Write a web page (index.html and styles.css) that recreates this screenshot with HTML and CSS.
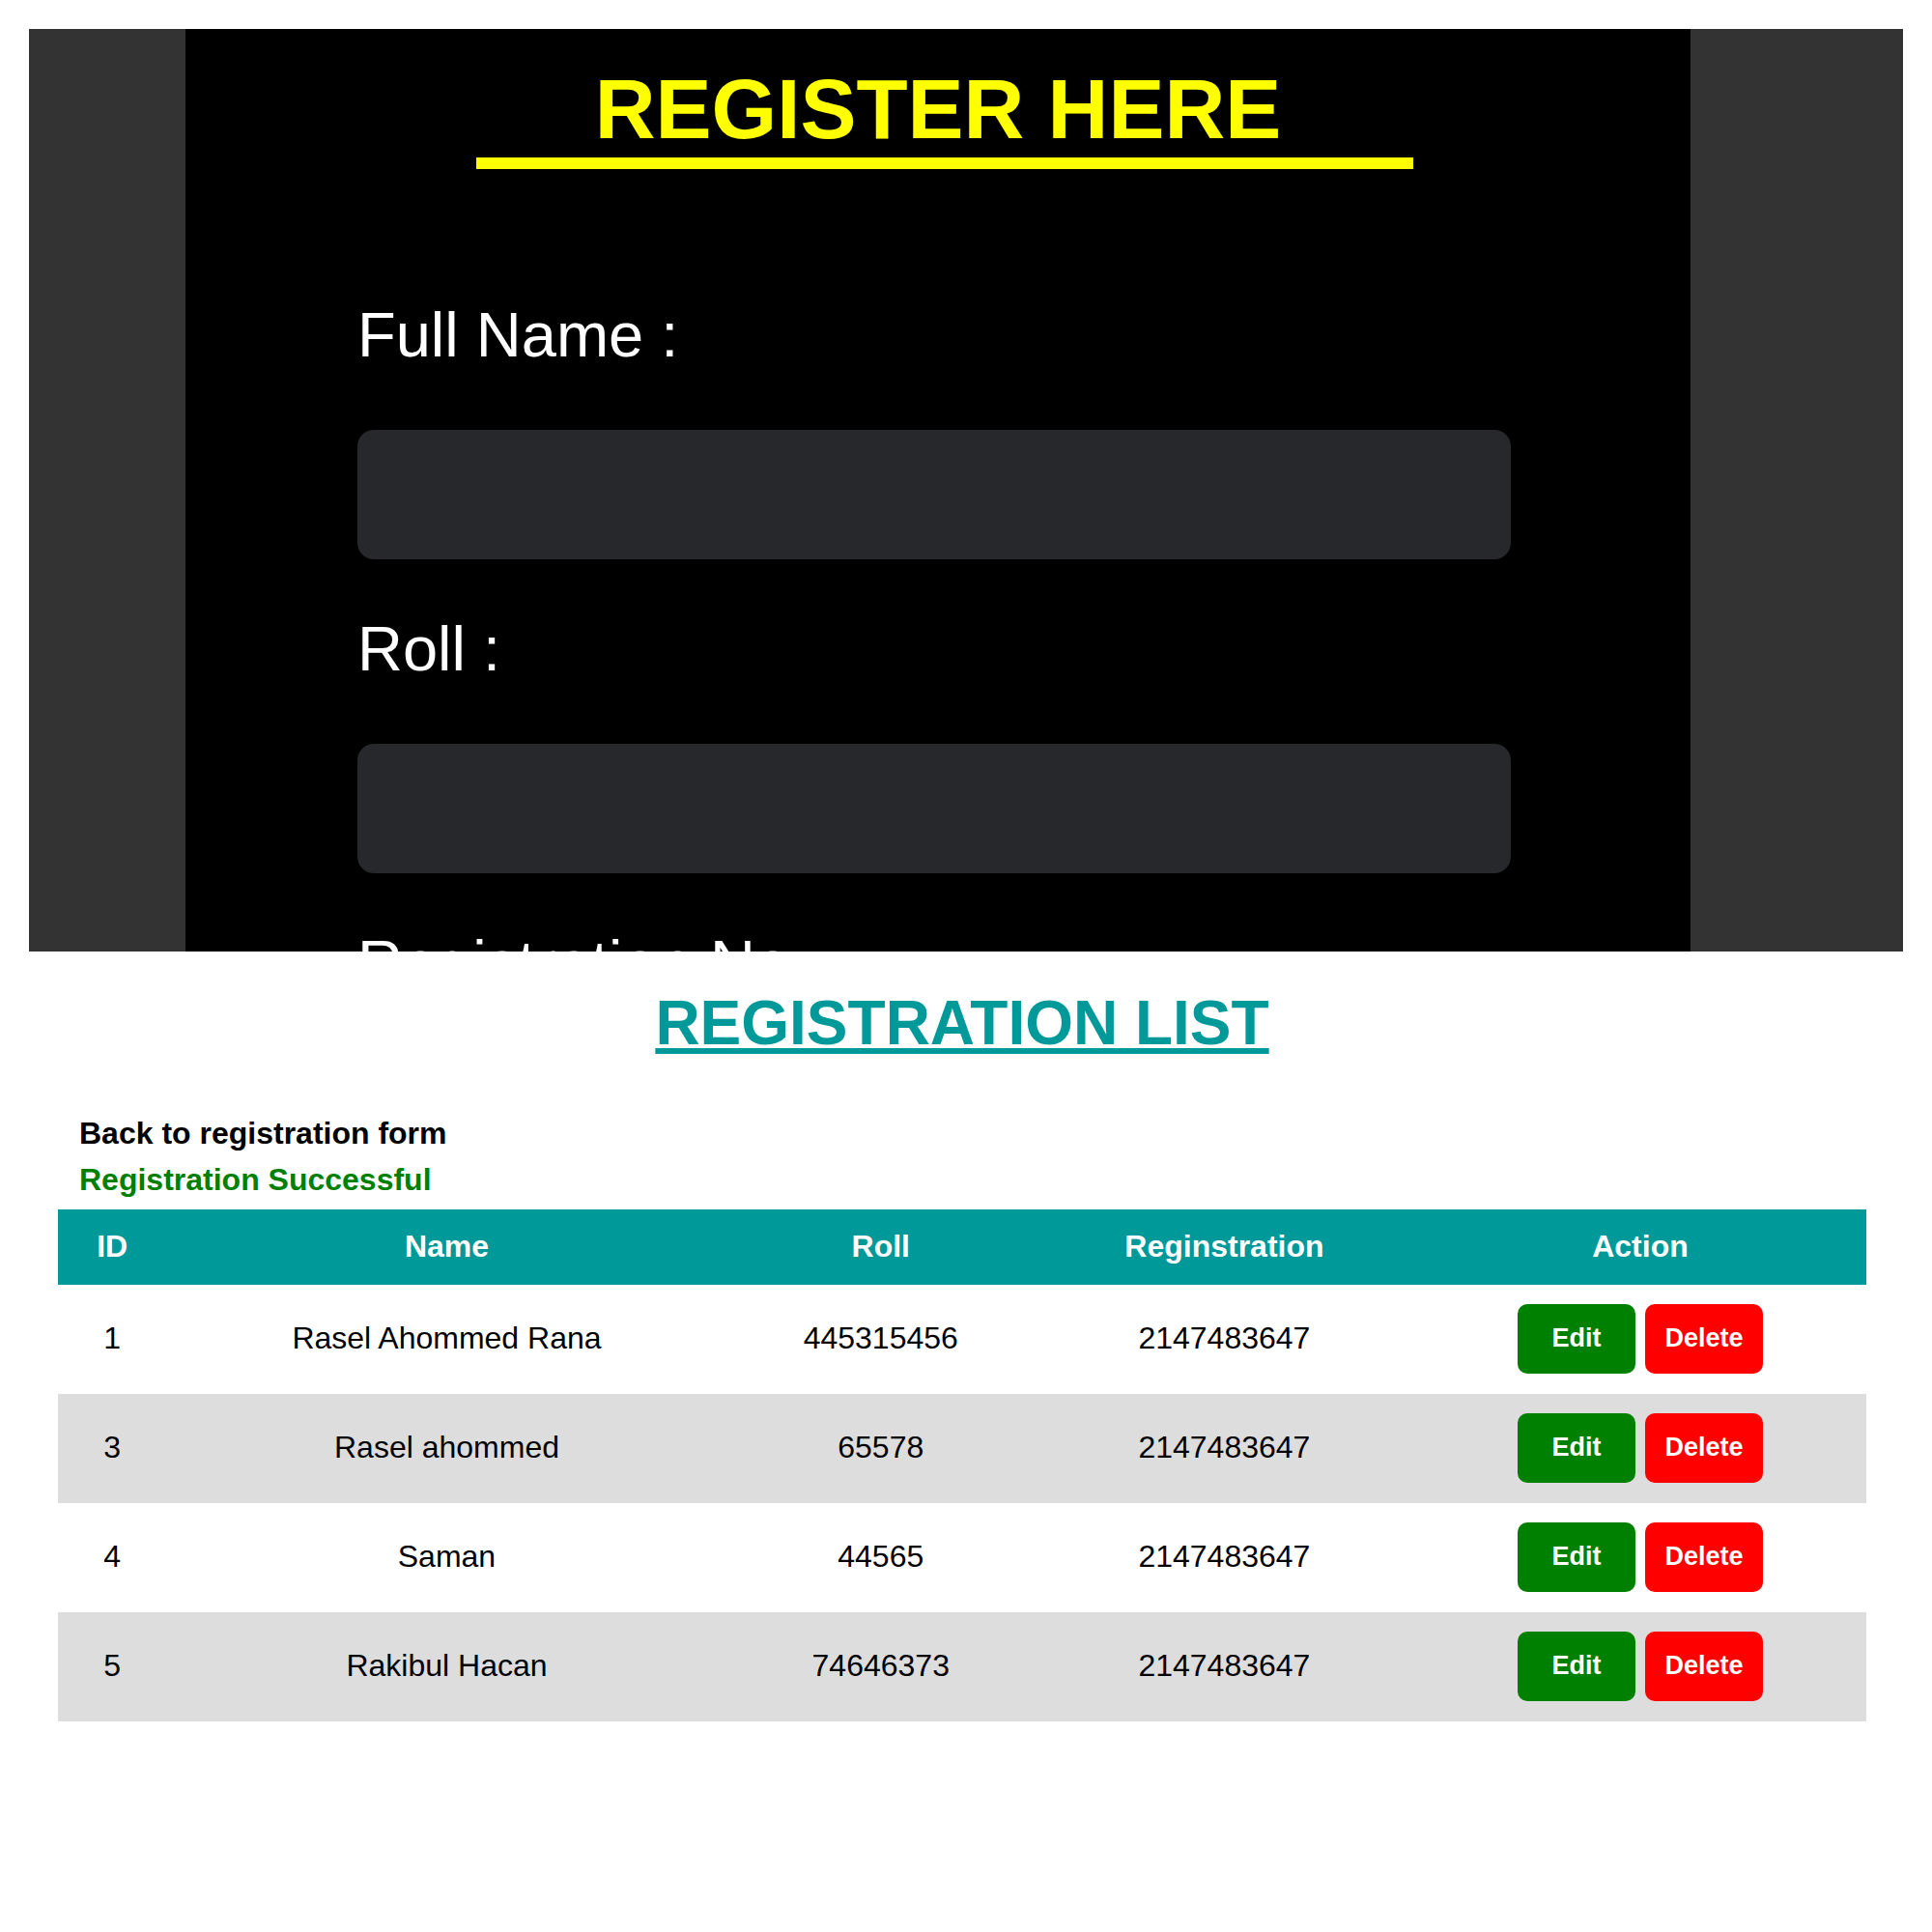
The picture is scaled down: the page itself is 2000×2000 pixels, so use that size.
FILE: index.html
```html
<!DOCTYPE html>
<html lang="en">
<head>
  <meta charset="utf-8">
  <title>Registration</title>
  <link rel="stylesheet" href="styles.css">
</head>
<body>
  <section class="register">
    <form class="register-form">
      <h1 class="register-title">REGISTER HERE</h1>
      <div class="register-rule"></div>
      <div class="fields">
        <div class="field">
          <label class="field-label" for="full-name">Full Name :</label>
          <input class="field-input" id="full-name" type="text">
        </div>
        <div class="field">
          <label class="field-label" for="roll">Roll :</label>
          <input class="field-input" id="roll" type="text">
        </div>
        <div class="field">
          <label class="field-label" for="registration-no">Registration No :</label>
          <input class="field-input" id="registration-no" type="text">
        </div>
      </div>
    </form>
  </section>

  <main class="list">
    <h2 class="list-title">REGISTRATION LIST</h2>
    <div class="list-notes">
      <a class="back-link" href="#">Back to registration form</a>
      <p class="success">Registration Successful</p>
    </div>
    <table class="records">
      <colgroup>
        <col class="col-id">
        <col class="col-name">
        <col class="col-roll">
        <col class="col-registration">
        <col class="col-action">
      </colgroup>
      <thead>
        <tr><th>ID</th><th>Name</th><th>Roll</th><th>Reginstration</th><th>Action</th></tr>
      </thead>
      <tbody>
        <tr>
          <td>1</td><td>Rasel Ahommed Rana</td><td>445315456</td><td>2147483647</td>
          <td><div class="actions"><button class="btn btn-edit" type="button">Edit</button><button class="btn btn-delete" type="button">Delete</button></div></td>
        </tr>
        <tr>
          <td>3</td><td>Rasel ahommed</td><td>65578</td><td>2147483647</td>
          <td><div class="actions"><button class="btn btn-edit" type="button">Edit</button><button class="btn btn-delete" type="button">Delete</button></div></td>
        </tr>
        <tr>
          <td>4</td><td>Saman</td><td>44565</td><td>2147483647</td>
          <td><div class="actions"><button class="btn btn-edit" type="button">Edit</button><button class="btn btn-delete" type="button">Delete</button></div></td>
        </tr>
        <tr>
          <td>5</td><td>Rakibul Hacan</td><td>74646373</td><td>2147483647</td>
          <td><div class="actions"><button class="btn btn-edit" type="button">Edit</button><button class="btn btn-delete" type="button">Delete</button></div></td>
        </tr>
      </tbody>
    </table>
  </main>
</body>
</html>
```
FILE: styles.css
```css
* {
  box-sizing: border-box;
}

body {
  margin: 0;
  padding: 30px;
  background: #fff;
  color: #000;
  font-family: Arial, "Liberation Sans", sans-serif;
  font-size: 32px;
}

/* Form panel: the part below the fold is clipped */
.register {
  aspect-ratio: 388 / 191;
  min-height: 0;
  overflow: hidden;
  padding: 0 220px 0 162px;
  background: #333;
}

.register-form {
  padding-top: 33px;
  background: #000;
}

.register-title {
  margin: 0;
  color: #ff0;
  font-size: 87px;
  line-height: 100px;
  text-align: center;
}

.register-rule {
  height: 12px;
  margin: 0 287px 132px 301px;
  background: #ff0;
}

.fields {
  display: flex;
  flex-direction: column;
  gap: 53px;
  padding: 0 186px 0 178px;
}

.field {
  display: flex;
  flex-direction: column;
  gap: 58px;
}

.field-label {
  color: #fff;
  font-size: 65px;
  line-height: 80px;
}

.field-input {
  width: 100%;
  height: 134px;
  padding: 0 32px;
  border: 0;
  border-radius: 17px;
  background: #27282c;
  color: #fff;
  font: inherit;
}

.list {
  padding: 34px 38px 0 30px;
}

.list-title {
  margin: 0 0 50px;
  color: #099;
  font-size: 64px;
  line-height: 80px;
  text-align: center;
  text-decoration: underline;
  text-decoration-thickness: 6px;
  text-underline-offset: 4px;
  text-decoration-skip-ink: none;
}

.list-notes {
  display: flex;
  flex-direction: column;
  align-items: flex-start;
  margin-bottom: 7px;
  padding-left: 22px;
  font-weight: bold;
  line-height: 48px;
}

.back-link {
  color: #000;
  text-decoration: none;
}

.success {
  margin: 0;
  color: green;
}

.records {
  width: 100%;
  table-layout: fixed;
  border-collapse: collapse;
  text-align: center;
}

.col-id { width: 6%; }
.col-name { width: 31%; }
.col-roll { width: 17%; }
.col-registration { width: 21%; }
.col-action { width: 25%; }

.records th {
  height: 78px;
  padding: 0 0 2px;
  background: #099;
  color: #fff;
}

.records td {
  height: 113px;
  padding: 0 0 2px;
}

.records tbody tr:nth-child(even) {
  background: #ddd;
}

.actions {
  display: flex;
  justify-content: center;
  gap: 10px;
}

.btn {
  width: 122px;
  height: 72px;
  padding: 0;
  border: 0;
  border-radius: 10px;
  color: #fff;
  font-family: inherit;
  font-size: 27px;
  font-weight: bold;
}

.btn-edit { background: green; }
.btn-delete { background: red; }
```
